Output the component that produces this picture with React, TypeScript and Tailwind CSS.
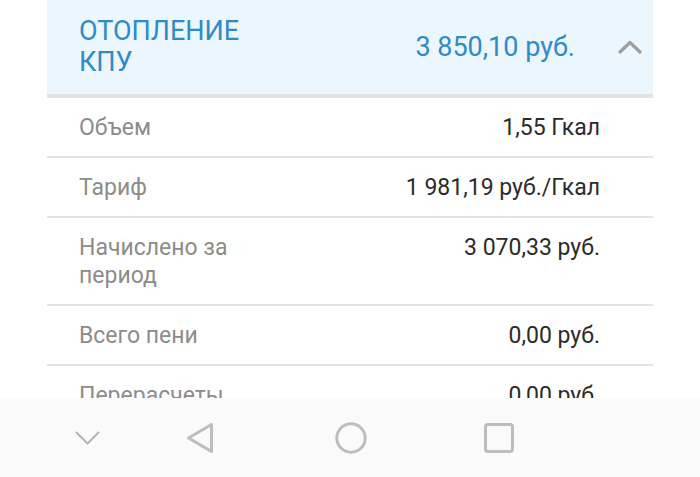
import React from "react";

const rows: { label: string[]; value: string }[] = [
  { label: ["Объем"], value: "1,55 Гкал" },
  { label: ["Тариф"], value: "1 981,19 руб./Гкал" },
  { label: ["Начислено за", "период"], value: "3 070,33 руб." },
  { label: ["Всего пени"], value: "0,00 руб." },
  { label: ["Перерасчеты"], value: "0,00 руб." },
  { label: ["Оплачено"], value: "0,00 руб." },
];

export default function App() {
  return (
    <div className="relative h-[477px] w-[700px] overflow-hidden bg-white font-['Roboto',sans-serif]">
      <div className="mx-[47px]">
        {/* Header */}
        <div className="flex items-center bg-[#ebf6fe] pl-[32px] pr-[11px] py-4 border-b-4 border-[#e3e3e3]">
          <div className="flex-1 text-[27px] leading-[31px] text-[#2f8bc6]">
            ОТОПЛЕНИЕ
            <br />
            КПУ
          </div>
          <div className="text-[27px] leading-[31px] text-[#2f8bc6]">3 850,10 руб.</div>
          <svg className="ml-[43px]" width="24" height="14" viewBox="0 0 24 14" fill="none">
            <path d="M2 12 L12 2.5 L22 12" stroke="#9e9e9e" strokeWidth="3.2" strokeLinecap="round" strokeLinejoin="round" />
          </svg>
        </div>

        {/* Rows */}
        {rows.map((r) => (
          <div
            key={r.label.join(" ")}
            className="flex items-start justify-between border-b-2 border-[#e2e2e2] pl-[32px] pr-[53px] pt-4 pb-[14px] text-[23px] leading-[28px]"
          >
            <div className="text-[#8c8c8c]">
              {r.label.map((l) => (
                <div key={l}>{l}</div>
              ))}
            </div>
            <div className="text-[#2b2b2b]">{r.value}</div>
          </div>
        ))}
      </div>

      {/* Android nav bar */}
      <div className="absolute bottom-0 left-0 right-0 flex h-[79px] items-center bg-[#fafafa]">
        <svg className="ml-[75px]" width="25" height="14" viewBox="0 0 25 14" fill="none">
          <path d="M1.5 1.5 L12.5 12.5 L23.5 1.5" stroke="#b5b5b5" strokeWidth="2" strokeLinecap="round" strokeLinejoin="round" />
        </svg>
        <svg className="ml-[86px]" width="28" height="32" viewBox="0 0 28 32" fill="none">
          <path d="M25.5 2.5 L25.5 29.5 L2.5 16 Z" stroke="#bdbdbd" strokeWidth="3" strokeLinejoin="round" />
        </svg>
        <svg className="ml-[121px]" width="32" height="32" viewBox="0 0 32 32" fill="none">
          <circle cx="16" cy="16" r="14.2" stroke="#bdbdbd" strokeWidth="3" />
        </svg>
        <svg className="ml-[117px]" width="30" height="30" viewBox="0 0 30 30" fill="none">
          <rect x="1.5" y="1.5" width="27" height="27" rx="2.5" stroke="#bdbdbd" strokeWidth="3" />
        </svg>
      </div>
    </div>
  );
}
